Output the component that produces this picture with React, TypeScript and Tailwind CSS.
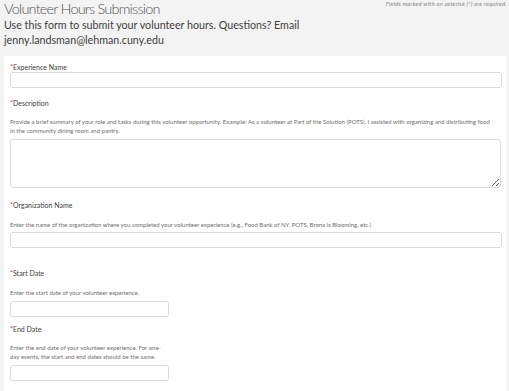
const FONT = "font-['Lato','Liberation_Sans',sans-serif]";

function Label({ children }: { children: React.ReactNode }) {
  return (
    <div className="text-[7px] leading-[10px] text-[#3e3e3c]">
      <span className="text-[#c23934]">*</span>
      {children}
    </div>
  );
}

function Help({ children, className = "" }: { children: React.ReactNode; className?: string }) {
  return <p className={`text-[6px] leading-[9.5px] text-[#706e6b] ${className}`}>{children}</p>;
}

function Input({ className = "" }: { className?: string }) {
  return (
    <input
      type="text"
      className={`block h-[16px] rounded-[3px] border border-[#dddbda] bg-white outline-none ${className}`}
    />
  );
}

export default function App() {
  return (
    <div className={`w-[509px] h-[391px] overflow-hidden bg-[#f3f3f3] ${FONT}`}>
      {/* Header */}
      <div className="flex justify-between pl-[4px] pr-[2px] h-[56px]">
        <div>
          <h1 className="text-[14.5px] leading-[18px] font-light tracking-[-0.8px] text-[#555555]">
            Volunteer Hours Submission
          </h1>
          <p className="text-[10.7px] leading-[15px] text-[#3e3e3c] mt-[-1px]">
            Use this form to submit your volunteer hours. Questions? Email
            <br />
            jenny.landsman@lehman.cuny.edu
          </p>
        </div>
        <p className="text-[6px] italic tracking-[0.15px] text-[#8a8a8a] leading-[8px]">
          Fields marked with an asterisk (*) are required.
        </p>
      </div>

      {/* Form panel */}
      <div className="ml-[4px] mr-[2px] h-[335px] bg-white pl-[6px] pr-[5px] pt-[6px]">
        <Label>Experience Name</Label>
        <Input className="w-full" />

        <div className="mt-[10px]">
          <Label>Description</Label>
        </div>
        <Help className="mt-[8.5px]">
          Provide a brief summary of your role and tasks during this volunteer opportunity. Example: As a volunteer at
          Part of the Solution (POTS), I assisted with organizing and distributing food
          <br />
          in the community dining room and pantry.
        </Help>
        <textarea className="mt-[3px] block w-[491px] h-[49px] rounded-[3px] border border-[#dddbda] outline-none resize-y" />

        <div className="mt-[12.7px]">
          <Label>Organization Name</Label>
        </div>
        <Help className="mt-[10px]">
          Enter the name of the organization where you completed your volunteer experience (e.g., Food Bank of NY, POTS,
          Bronx is Blooming, etc.)
        </Help>
        <Input className="mt-[2.5px] w-full h-[15px]" />

        <div className="mt-[20px]">
          <Label>Start Date</Label>
        </div>
        <Help className="mt-[10px]">Enter the start date of your volunteer experience.</Help>
        <Input className="mt-[3px] w-[159px] h-[15px]" />

        <div className="mt-[7px]">
          <Label>End Date</Label>
        </div>
        <Help className="mt-[9.5px] w-[158px] leading-[9px]">
          Enter the end date of your volunteer experience. For one-day events, the start and end dates should be the
          same.
        </Help>
        <Input className="mt-[3.5px] w-[159px] h-[15px]" />
      </div>
    </div>
  );
}
